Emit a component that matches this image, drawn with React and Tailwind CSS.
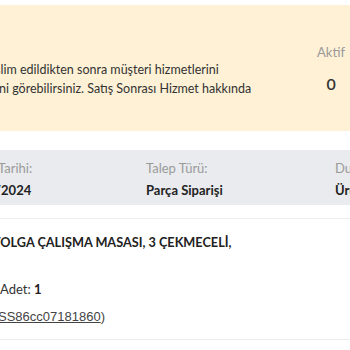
import React from 'react'

const font = { fontFamily: 'Lato, "Noto Sans", sans-serif' }

export default function App() {
  return (
    <div className="w-[350px] h-[350px] overflow-hidden bg-white text-[#222]" style={font}>
      <div className="pt-[5px]">
        {/* notice */}
        <div className="h-[126px] bg-[#fef1d6] flex items-start justify-between pr-[5px]">
          <div className="pt-[55px] text-[12.5px] leading-[19px] text-[#333] whitespace-nowrap">
            <p className="-ml-[16px]">teslim edildikten sonra müşteri hizmetlerini</p>
            <p className="-ml-[1px]">ni görebilirsiniz. Satış Sonrası Hizmet hakkında</p>
          </div>
          <div className="pt-[38px] flex flex-col items-center gap-[9px]">
            <span className="text-[13px] text-[#9a9a9a]">Aktif</span>
            <span className="text-[16px] font-semibold text-[#333]">0</span>
          </div>
        </div>
      </div>

      {/* request info */}
      <div className="mt-[19px] h-[55px] bg-[#e9ebee] grid grid-cols-[146px_189px_1fr] items-center whitespace-nowrap pt-[4px]">
        <div className="-ml-[2px] flex flex-col gap-[3px]">
          <span className="text-[13px] text-[#9a9a9a]">Tarihi:</span>
          <span className="text-[13px] font-bold text-[#222] -ml-[3px]">/2024</span>
        </div>
        <div className="flex flex-col gap-[3px]">
          <span className="text-[13px] text-[#9a9a9a]">Talep Türü:</span>
          <span className="text-[13px] font-bold text-[#222]">Parça Siparişi</span>
        </div>
        <div className="flex flex-col gap-[3px]">
          <span className="text-[13px] text-[#9a9a9a]">Durum:</span>
          <span className="text-[13px] font-bold text-[#222]">Ürün</span>
        </div>
      </div>

      {/* product */}
      <div className="mt-[13px] border-t border-[#ececec] whitespace-nowrap">
        <p className="mt-[14px] -ml-[7px] text-[12.7px] font-bold text-[#222]">
          TOLGA ÇALIŞMA MASASI, 3 ÇEKMECELİ,
        </p>
        <p className="mt-[28px] text-[13px] text-[#333]">
          Adet: <span className="font-bold text-[#222]">1</span>
        </p>
        <p className="mt-[7px] -ml-[2px] text-[13px] text-[#444]" style={{ fontFamily: '"Liberation Sans", Arial, sans-serif' }}>
          <span className="underline">SS86cc07181860</span>)
        </p>
        <div className="mt-[13px] border-t border-[#ececec]" />
      </div>
    </div>
  )
}
